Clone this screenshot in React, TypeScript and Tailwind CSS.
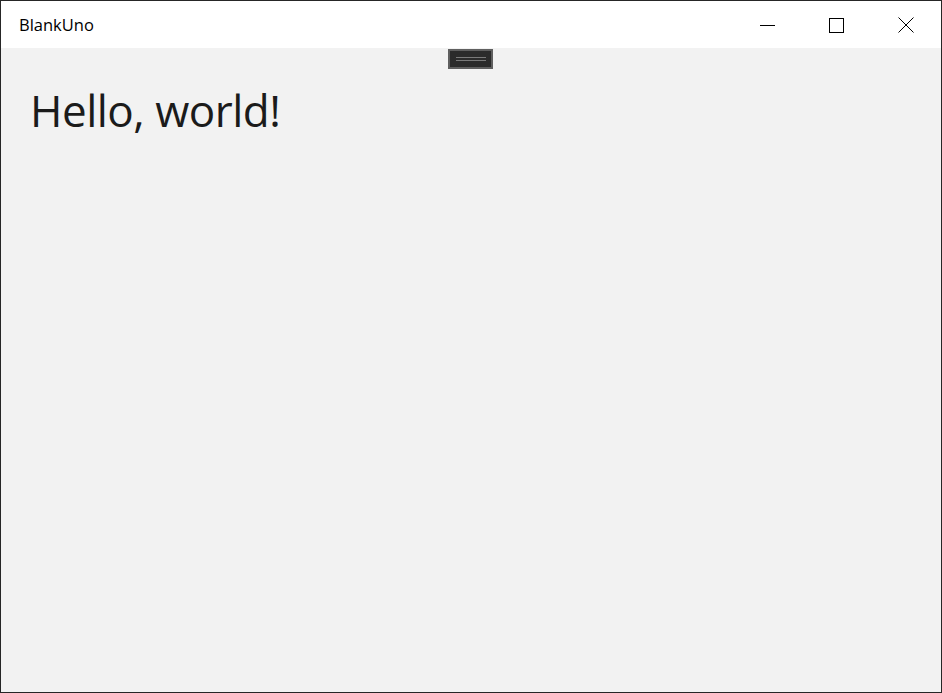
export default function App() {
  return (
    <div
      className="w-[942px] h-[693px] flex flex-col border border-[#262626] bg-[#f2f2f2] overflow-hidden"
      style={{ fontFamily: '"Segoe UI", "Open Sans", "Noto Sans", sans-serif' }}
    >
      {/* Title bar */}
      <div className="h-[47px] shrink-0 bg-white flex items-center">
        <span className="pl-[18px] pt-[2px] text-[16.5px] text-black flex-1">BlankUno</span>
        <div className="flex h-full">
          <div className="w-[69px] h-full flex items-center justify-center pr-[2px] pt-px">
            <div className="w-[15px] h-px bg-black" />
          </div>
          <div className="w-[69px] h-full flex items-center justify-center pr-[3px] pt-px">
            <div className="w-[15px] h-[15px] border border-black" />
          </div>
          <div className="w-[69px] h-full flex items-center justify-center pr-[2px] pt-px">
            <svg width="16" height="16" viewBox="0 0 16 16">
              <path d="M0.5 0.5 L15.5 15.5 M15.5 0.5 L0.5 15.5" stroke="#000" strokeWidth="1" fill="none" />
            </svg>
          </div>
        </div>
      </div>

      {/* Content */}
      <div className="relative flex-1">
        <div className="absolute left-[447px] top-px w-[45px] h-[20px] border-2 border-[#5f5f5f] bg-[#2b2b2b] flex flex-col items-center justify-center gap-[2px]">
          <div className="w-[30px] h-px bg-[#7a7a7a]" />
          <div className="w-[30px] h-px bg-[#7a7a7a]" />
        </div>
        <h1 className="pl-[29px] pt-[33px] text-[44px] leading-[58px] tracking-[-0.5px] text-[#1b1b1b] font-normal">
          Hello, world!
        </h1>
      </div>
    </div>
  )
}
